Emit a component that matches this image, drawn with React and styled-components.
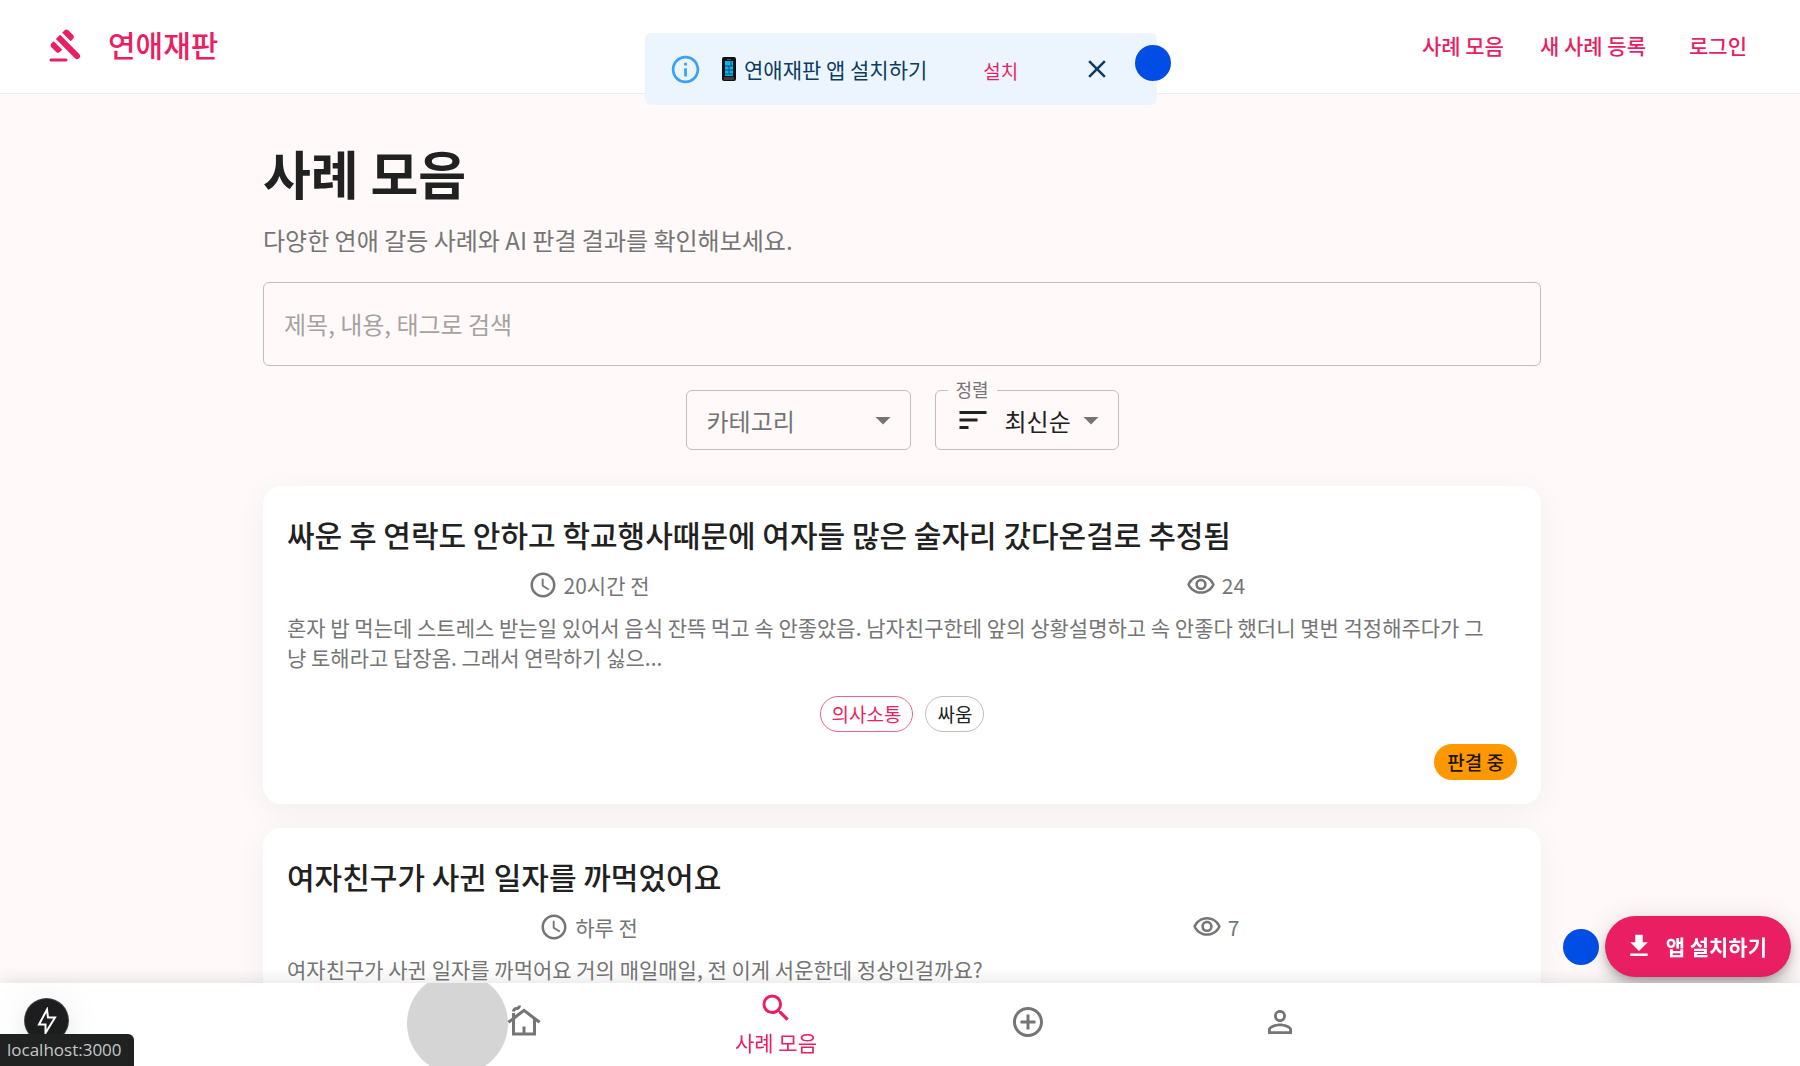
import styled, { createGlobalStyle, css } from 'styled-components'
import {
  MdAccessTime,
  MdAddCircleOutline,
  MdArrowDropDown,
  MdClose,
  MdFileDownload,
  MdInfoOutline,
  MdOutlineCottage,
  MdOutlineVisibility,
  MdPersonOutline,
  MdSearch,
  MdSort,
} from 'react-icons/md'

const cases = [
  {
    id: 1,
    title: '싸운 후 연락도 안하고 학교행사때문에 여자들 많은 술자리 갔다온걸로 추정됨',
    time: '20시간 전',
    views: 24,
    text: '혼자 밥 먹는데 스트레스 받는일 있어서 음식 잔뜩 먹고 속 안좋았음. 남자친구한테 앞의 상황설명하고 속 안좋다 했더니 몇번 걱정해주다가 그냥 토해라고 답장옴. 그래서 연락하기 싫으...',
    category: '의사소통',
    tags: ['싸움'],
    status: '판결 중',
  },
  {
    id: 2,
    title: '여자친구가 사귄 일자를 까먹었어요',
    time: '하루 전',
    views: 7,
    text: '여자친구가 사귄 일자를 까먹어요 거의 매일매일, 전 이게 서운한데 정상인걸까요?',
  },
]

const GavelIcon = () => (
  <svg width="36" height="36" viewBox="0 0 24 24" fill="currentColor" aria-hidden="true">
    <path d="M2 21h10a1 1 0 0 1 0 2H2a1 1 0 0 1 0-2z" />
    <path d="M5.24 8.07l2.83-2.83 12.73 12.73a2 2 0 0 1-2.83 2.83z" />
    <path d="M13.73 2.41l2.83 2.83a2 2 0 0 1 0 2.83l-1.42 1.42-5.66-5.66 1.42-1.42a2 2 0 0 1 2.83 0z" />
    <path d="M3.83 9.48l5.66 5.66-1.42 1.42a2 2 0 0 1-2.83 0l-2.83-2.83a2 2 0 0 1 0-2.83z" />
  </svg>
)

const PhoneIcon = () => (
  <svg width="14" height="24" viewBox="0 0 14 24" aria-hidden="true">
    <rect width="14" height="24" rx="2" fill="#111" />
    <rect x="5" y="2" width="4" height="1" fill="#555" />
    <rect x="3" y="4" width="8" height="15" fill="#00b7f1" />
    <path d="M3 9h8M3 13h8M7 9v8M9 4v5M3 17h8" stroke="#0b4a66" fill="none" />
    <rect x="2" y="20" width="10" height="3" fill="#3c3c3c" />
  </svg>
)

const BoltIcon = () => (
  <svg width="24" height="28" viewBox="0 0 24 28" fill="none" aria-hidden="true">
    <path
      d="M12 2.5 4 17.5h6.5v8.5L20 10.5h-7z"
      stroke="#fff"
      strokeWidth="2"
      strokeLinejoin="miter"
    />
  </svg>
)

export default function App() {
  return (
    <>
      <GlobalStyle />
      <Shell>
        <Header>
          <Brand href="#">
            <GavelIcon />
            연애재판
          </Brand>
          <HeaderNav>
            <HeaderLink href="#cases">사례 모음</HeaderLink>
            <HeaderLink href="#new">새 사례 등록</HeaderLink>
            <HeaderLink href="#login">로그인</HeaderLink>
          </HeaderNav>
        </Header>

        <Main>
          <Content>
            <PageTitle>사례 모음</PageTitle>
            <Subtitle>다양한 연애 갈등 사례와 AI 판결 결과를 확인해보세요.</Subtitle>
            <SearchInput
              type="text"
              aria-label="검색"
              placeholder="제목, 내용, 태그로 검색"
            />
            <Filters>
              <SelectBox>
                <CategorySelect aria-label="카테고리" defaultValue="">
                  <option value="">카테고리</option>
                  <option value="talk">의사소통</option>
                </CategorySelect>
                <SelectArrow />
              </SelectBox>
              <SelectBox>
                <FloatingLabel htmlFor="sort">정렬</FloatingLabel>
                <SortIcon />
                <SortSelect id="sort" defaultValue="latest">
                  <option value="latest">최신순</option>
                  <option value="views">조회순</option>
                </SortSelect>
                <SelectArrow />
              </SelectBox>
            </Filters>

            <CaseList>
              {cases.map((item) => (
                <Card key={item.id}>
                  <CardTitle>{item.title}</CardTitle>
                  <Meta>
                    <MetaItem>
                      <MdAccessTime size={30} />
                      {item.time}
                    </MetaItem>
                    <MetaItem>
                      <MdOutlineVisibility size={30} />
                      {item.views}
                    </MetaItem>
                  </Meta>
                  <Description>{item.text}</Description>
                  {item.category && (
                    <Chips>
                      <Chip $primary>{item.category}</Chip>
                      {item.tags.map((tag) => (
                        <Chip key={tag}>{tag}</Chip>
                      ))}
                    </Chips>
                  )}
                  {item.status && <Status>{item.status}</Status>}
                </Card>
              ))}
            </CaseList>
          </Content>
        </Main>

        <BottomNav>
          <NavButton aria-label="홈">
            <Ripple />
            <MdOutlineCottage size={36} />
          </NavButton>
          <NavButton $active>
            <MdSearch size={36} />
            사례 모음
          </NavButton>
          <NavButton aria-label="새 사례 등록">
            <MdAddCircleOutline size={36} />
          </NavButton>
          <NavButton aria-label="로그인">
            <MdPersonOutline size={36} />
          </NavButton>
        </BottomNav>
      </Shell>

      <InstallBanner role="alert">
        <MdInfoOutline size={33} color="#3ba2f5" />
        <BannerText>
          <PhoneIcon />
          연애재판 앱 설치하기
        </BannerText>
        <BannerAction>설치</BannerAction>
        <BannerClose aria-label="닫기">
          <MdClose size={30} />
        </BannerClose>
        <BannerDot />
      </InstallBanner>

      <InstallCorner>
        <Dot />
        <Fab>
          <MdFileDownload size={30} />
          앱 설치하기
        </Fab>
      </InstallCorner>

      <DevBadge aria-label="dev tools">
        <BoltIcon />
      </DevBadge>
      <StatusUrl>localhost:3000</StatusUrl>
    </>
  )
}

const GlobalStyle = createGlobalStyle`
  * {
    box-sizing: border-box;
  }

  body {
    margin: 0;
    background: #fff9f9;
    color: #212121;
    font-family: 'Noto Sans CJK KR', 'Noto Sans', sans-serif;
    font-size: 21px;
    line-height: 30px;
  }

  button, input, select {
    font-family: inherit;
    margin: 0;
  }

  button {
    border: 0;
    padding: 0;
    cursor: pointer;
  }

  svg {
    flex-shrink: 0;
  }
`

const Shell = styled.div`
  display: flex;
  flex-direction: column;
  height: 100vh;
`

const Header = styled.header`
  display: flex;
  align-items: center;
  justify-content: space-between;
  padding: 22px 34px 26px 48px;
  background: #fff;
  border-bottom: 1px solid #ebebeb;
`

const Brand = styled.a`
  display: flex;
  align-items: center;
  gap: 24px;
  color: #e91e63;
  font-size: 30px;
  font-weight: 500;
  line-height: 45px;
  text-decoration: none;
`

const HeaderNav = styled.nav`
  display: flex;
  gap: 12px;
`

const HeaderLink = styled.a`
  min-width: 96px;
  padding: 0 12px;
  color: #e91e63;
  font-weight: 500;
  line-height: 36px;
  text-align: center;
  text-decoration: none;
`

const Main = styled.main`
  flex: 1;
  min-height: 0;
  overflow-y: auto;
  scrollbar-width: none;
  padding: 47px 36px 48px 40px;
`

const Content = styled.div`
  max-width: 1278px;
  margin: 0 auto;
`

const PageTitle = styled.h1`
  margin: 0 0 18px;
  font-size: 52px;
  font-weight: 700;
  line-height: 63px;
`

const Subtitle = styled.p`
  margin: 0 0 24px;
  color: #757575;
  font-size: 24px;
  line-height: 36px;
`

const field = css`
  border: 1px solid #c2bebe;
  border-radius: 6px;
  background: transparent;
  font-size: 24px;
  outline: none;
`

const SearchInput = styled.input`
  ${field}
  display: block;
  width: 100%;
  height: 84px;
  padding: 0 20px 2px;
  color: #212121;

  &::placeholder {
    color: #a6a2a2;
    opacity: 1;
  }
`

const Filters = styled.div`
  display: flex;
  justify-content: center;
  gap: 24px;
  margin: 24px 0 36px;
`

const SelectBox = styled.div`
  position: relative;
`

const Select = styled.select`
  ${field}
  display: block;
  height: 60px;
  appearance: none;
`

const CategorySelect = styled(Select)`
  width: 225px;
  padding: 0 48px 0 20px;
  color: #757575;
`

const SortSelect = styled(Select)`
  width: 184px;
  padding: 0 48px 0 69px;
  color: #212121;
`

const SelectArrow = styled(MdArrowDropDown)`
  position: absolute;
  top: 12px;
  right: 10px;
  width: 36px;
  height: 36px;
  color: #757575;
  pointer-events: none;
`

const SortIcon = styled(MdSort)`
  position: absolute;
  top: 12px;
  left: 20px;
  width: 36px;
  height: 36px;
  pointer-events: none;
`

const FloatingLabel = styled.label`
  position: absolute;
  top: -13px;
  left: 13px;
  padding: 0 8px;
  background: #fff9f9;
  color: #757575;
  font-size: 18px;
  line-height: 24px;
`

const CaseList = styled.div`
  display: flex;
  flex-direction: column;
  gap: 24px;
`

const Card = styled.article`
  display: flex;
  flex-direction: column;
  padding: 24px;
  border-radius: 18px;
  background: #fff;
  box-shadow: 0 6px 30px rgba(0, 0, 0, 0.05);
`

const CardTitle = styled.h2`
  margin: 0 0 12px;
  font-size: 30px;
  font-weight: 500;
  line-height: 48px;
`

const Meta = styled.div`
  display: grid;
  grid-template-columns: 1fr 1fr;
  gap: 24px;
  margin-bottom: 12px;
  color: #757575;
`

const MetaItem = styled.span`
  display: flex;
  align-items: center;
  justify-content: center;
  gap: 6px;
`

const Description = styled.p`
  margin: 0 0 24px;
  padding-right: 24px;
  color: #757575;
  word-break: break-all;
`

const Chips = styled.div`
  display: flex;
  justify-content: center;
  gap: 12px;
  margin-bottom: 12px;
`

const Chip = styled.span`
  padding: 0 11px;
  border: 1px solid ${({ $primary }) => ($primary ? '#f0628f' : '#bdbdbd')};
  border-radius: 18px;
  color: ${({ $primary }) => ($primary ? '#e91e63' : '#212121')};
  font-size: 19px;
  line-height: 34px;
`

const Status = styled.span`
  align-self: flex-end;
  padding: 0 13px;
  border-radius: 18px;
  background: #ff9800;
  color: #211400;
  font-size: 19px;
  font-weight: 500;
  line-height: 36px;
`

const BottomNav = styled.nav`
  position: relative;
  z-index: 2;
  display: flex;
  justify-content: center;
  height: 83px;
  padding-left: 4px;
  background: #fff;
  box-shadow: 0 -3px 15px rgba(0, 0, 0, 0.1);
`

const NavButton = styled.button`
  position: relative;
  display: flex;
  flex: 0 1 252px;
  flex-direction: column;
  align-items: center;
  justify-content: center;
  overflow: hidden;
  padding-bottom: ${({ $active }) => ($active ? '2px' : '6px')};
  background: transparent;
  color: ${({ $active }) => ($active ? '#e91e63' : '#757575')};
  font-size: 21px;
  line-height: 32px;

  svg {
    position: relative;
  }
`

const Ripple = styled.span`
  position: absolute;
  top: -10px;
  left: 9px;
  width: 101px;
  height: 101px;
  border-radius: 50%;
  background: #d5d5d5;
`

const Dot = styled.span`
  width: 36px;
  height: 36px;
  border-radius: 50%;
  background: #004ee6;
`

const InstallBanner = styled.div`
  position: fixed;
  top: 33px;
  left: calc(50% + 1px);
  z-index: 3;
  display: flex;
  align-items: center;
  width: 512px;
  height: 72px;
  padding: 0 24px;
  transform: translateX(-50%);
  border-radius: 6px;
  background: #ecf5fe;
  color: #0d3c61;
`

const BannerText = styled.span`
  display: flex;
  align-items: center;
  gap: 8px;
  margin-left: 20px;
`

const BannerAction = styled.button`
  margin-left: 56px;
  padding-top: 3px;
  background: transparent;
  color: #e91e63;
  font-size: 19px;
  line-height: 36px;
`

const BannerClose = styled.button`
  display: flex;
  margin-left: auto;
  margin-right: 21px;
  background: transparent;
  color: inherit;
`

const BannerDot = styled(Dot)`
  position: absolute;
  top: 12px;
  right: -14px;
`

const InstallCorner = styled.div`
  position: fixed;
  right: 9px;
  bottom: 89px;
  z-index: 1;
  display: flex;
  align-items: center;
  gap: 6px;
`

const Fab = styled.button`
  display: flex;
  align-items: center;
  gap: 12px;
  height: 61px;
  padding: 0 24px 2px 19px;
  border-radius: 31px;
  background: #e91e63;
  box-shadow: 0 5px 8px -2px rgba(0, 0, 0, 0.2), 0 9px 15px rgba(0, 0, 0, 0.14),
    0 2px 27px rgba(0, 0, 0, 0.12);
  color: #fff;
  font-size: 21px;
  font-weight: 700;
`

const DevBadge = styled.button`
  position: fixed;
  bottom: 24px;
  left: 25px;
  z-index: 3;
  display: flex;
  align-items: center;
  justify-content: center;
  width: 43px;
  height: 43px;
  border-radius: 50%;
  background: #1d1d1f;
  box-shadow: 0 0 0 1px #444, 0 16px 32px -8px rgba(0, 0, 0, 0.24), 0 0 40px rgba(0, 0, 0, 0.08);
`

const StatusUrl = styled.div`
  position: fixed;
  bottom: 0;
  left: 0;
  z-index: 4;
  padding: 0 12px 0 7px;
  border-top-right-radius: 6px;
  background: #1f2221;
  color: #c6c8ca;
  font-family: 'Open Sans', 'Noto Sans', sans-serif;
  font-size: 17px;
  line-height: 32px;
`
